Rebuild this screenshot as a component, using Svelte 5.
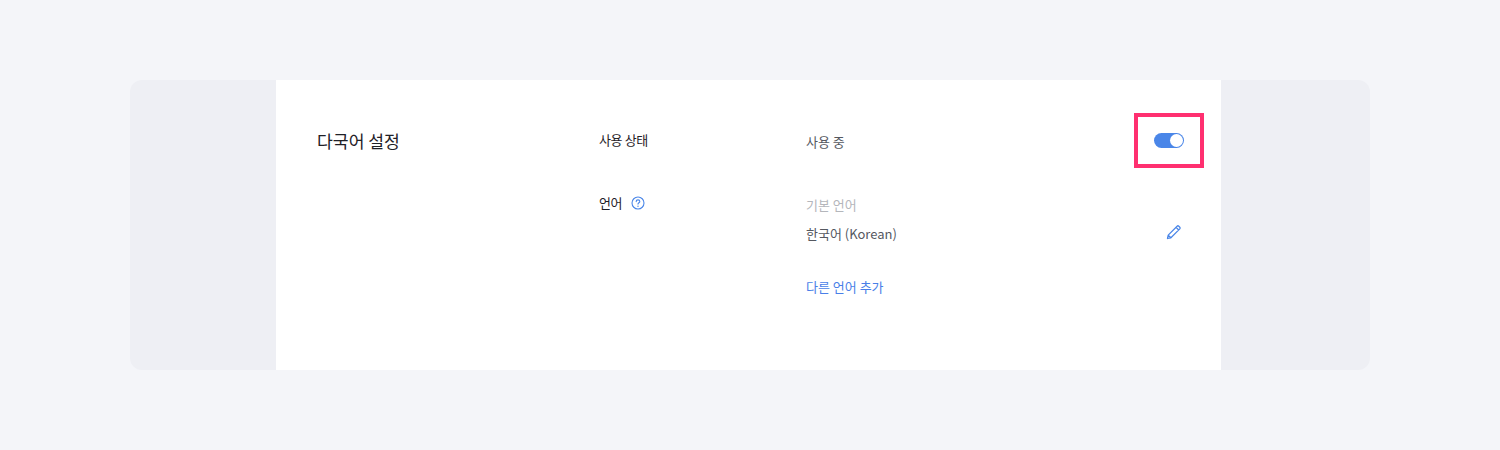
<script>
  const title = '다국어 설정';
</script>

<div class="page">
  <div class="card">
    <main class="panel">
      <h2 class="title">{title}</h2>
      <div class="rows">
        <div class="row status">
          <div class="label">사용 상태</div>
          <div class="value">사용 중</div>
          <div class="toggle-wrap">
            <span class="toggle"><span class="knob"></span></span>
            <span class="highlight"></span>
          </div>
        </div>
        <div class="row lang">
          <div class="label">
            언어
            <svg class="help" width="14" height="14" viewBox="0 0 14 14" fill="none" aria-hidden="true">
              <circle cx="7" cy="7" r="6" stroke="#4a86e8" stroke-width="1.1"/>
              <path d="M5.2 5.6c0-1 .8-1.7 1.8-1.7s1.8.7 1.8 1.6c0 1.3-1.8 1.3-1.8 2.6" stroke="#4a86e8" stroke-width="1.1" stroke-linecap="round"/>
              <circle cx="7" cy="10.2" r=".7" fill="#4a86e8"/>
            </svg>
          </div>
          <div class="lang-body">
            <div class="sub">기본 언어</div>
            <div class="lang-line">
              <span class="value">한국어 (Korean)</span>
              <svg class="pencil" width="16" height="16" viewBox="0 0 16 16" fill="none" aria-hidden="true">
                <path d="M1.5 14.5l.7-3.4 8.9-8.9c.5-.5 1.2-.5 1.7 0l1 1c.5.5.5 1.2 0 1.7l-8.9 8.9-3.4.7zM2.2 11.1l2.7 2.7M10 3.3l2.7 2.7" stroke="#4a86e8" stroke-width="1.25" stroke-linejoin="round"/>
              </svg>
            </div>
            <div class="add">다른 언어 추가</div>
          </div>
        </div>
      </div>
    </main>
  </div>
</div>

<style>
  :global(body) {
    margin: 0;
    background: #f4f5f9;
  }
  .page {
    height: 450px;
    padding: 80px 130px;
    box-sizing: border-box;
    font-family: "Noto Sans CJK KR", "Noto Sans", sans-serif;
  }
  .card {
    height: 290px;
    background: #eeeff4;
    border-radius: 12px;
    padding-left: 146px;
    padding-right: 149px;
    overflow: hidden;
  }
  .panel {
    height: 100%;
    background: #fff;
    display: flex;
    padding: 0 37px 0 41px;
    box-sizing: border-box;
  }
  .title {
    width: 282px;
    flex: none;
    margin: 47px 0 0;
    font-size: 17.2px;
    line-height: 28px;
    font-weight: 400;
    color: #1f2127;
  }
  .rows {
    flex: 1;
    min-width: 0;
    padding-top: 50px;
  }
  .row {
    display: flex;
    align-items: flex-start;
  }
  .status {
    height: 63px;
  }
  .label {
    width: 207px;
    flex: none;
    font-size: 13px;
    letter-spacing: -0.4px;
    line-height: 20px;
    color: #1f2127;
    display: flex;
    align-items: center;
    gap: 9px;
  }
  .value {
    font-size: 13px;
    line-height: 20px;
    color: #55585f;
  }
  .status .value {
    padding-top: 2px;
  }
  .toggle-wrap {
    position: relative;
    margin-left: auto;
    height: 16px;
    padding-top: 3px;
  }
  .toggle {
    display: block;
    width: 30px;
    height: 15px;
    border-radius: 8px;
    background: #4a86e8;
    position: relative;
  }
  .knob {
    position: absolute;
    right: 1px;
    top: 1px;
    width: 13px;
    height: 13px;
    border-radius: 50%;
    background: #fff;
  }
  .highlight {
    position: absolute;
    left: -20px;
    top: -17px;
    width: 62px;
    height: 47px;
    border: 4px solid #ff2f70;
  }
  .lang-body {
    flex: 1;
    min-width: 0;
    padding-top: 2px;
  }
  .sub {
    font-size: 13px;
    line-height: 20px;
    color: #b4b6bb;
  }
  .lang-line {
    display: flex;
    justify-content: space-between;
    align-items: flex-start;
    margin-top: 9px;
  }
  .pencil {
    margin-right: 2px;
  }
  .add {
    margin-top: 33px;
    font-size: 13px;
    line-height: 20px;
    color: #4a7fe8;
  }
</style>
